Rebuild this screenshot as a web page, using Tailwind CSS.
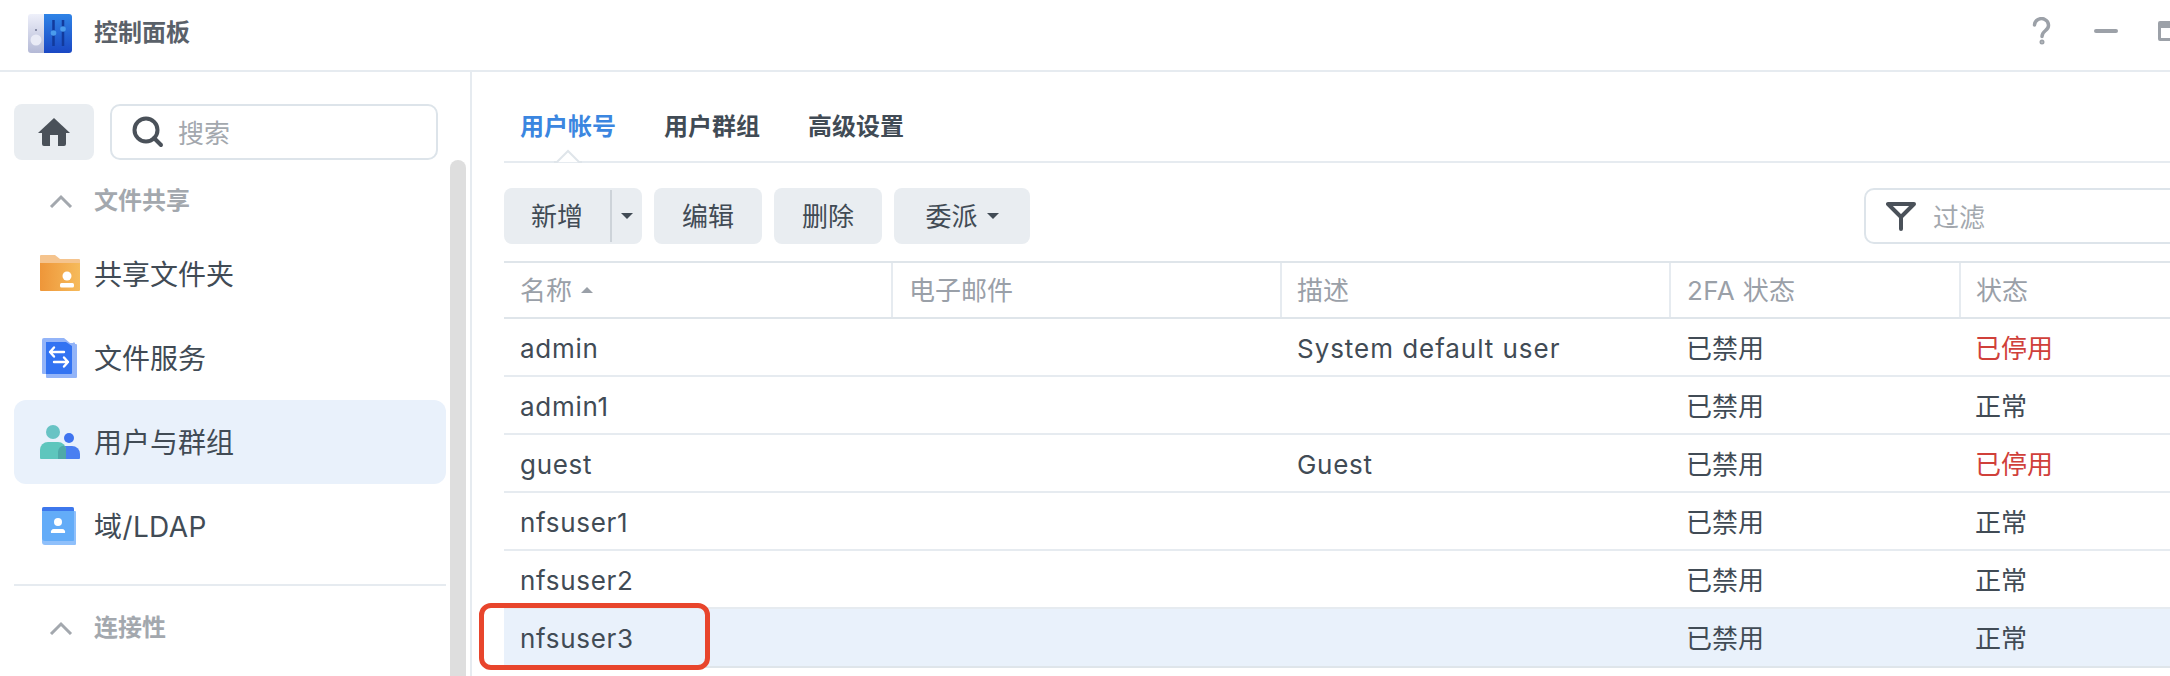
<!DOCTYPE html>
<html lang="zh-CN">
<head>
  <meta charset="UTF-8" />
  <title>控制面板</title>
  <script src="https://cdn.jsdelivr.net/npm/@tailwindcss/browser@4"></script>
</head>
<body class="bg-white text-[#414b55] [font-family:'Inter','Noto_Sans_CJK_SC',sans-serif] w-[2170px] h-[676px] overflow-hidden relative">

  <!-- title bar -->
  <header class="h-[72px] border-b-2 border-[#e6ebf0] flex items-center overflow-hidden pl-[28px]">
    <svg class="w-[44px] h-[40px] shrink-0 -mt-[3px]" viewBox="0 0 44 40">
      <defs>
        <linearGradient id="logoL" x1="0" y1="0" x2="0" y2="1"><stop offset="0" stop-color="#eef0fa"/><stop offset="1" stop-color="#b4b9d6"/></linearGradient>
        <linearGradient id="logoR" x1="0" y1="0" x2="0" y2="1"><stop offset="0" stop-color="#2f83e6"/><stop offset="1" stop-color="#1a48c4"/></linearGradient>
      </defs>
      <path d="M3 0h14v39H3a3 3 0 0 1-3-3V3a3 3 0 0 1 3-3z" fill="url(#logoL)"/>
      <path d="M16 0h25a3 3 0 0 1 3 3v33a3 3 0 0 1-3 3H16z" fill="url(#logoR)"/>
      <circle cx="8" cy="26" r="5.500" fill="#e9ebf6"/>
      <circle cx="8" cy="16" r="1" fill="#6d7390"/>
      <path d="M25.500 6v26M35 6v26" stroke="#123a9c" stroke-width="2.500"/>
      <circle cx="25.500" cy="19" r="2.800" fill="#4a9bec"/>
      <circle cx="35" cy="15" r="2.800" fill="#4a9bec"/>
    </svg>
    <span class="ml-[22px] text-[24px] font-semibold text-[#5a6169] -mt-[4px]">控制面板</span>
    <div class="ml-auto flex items-center -mt-[8px]">
      <svg class="w-[20px] h-[28px]" viewBox="0 0 20 28" fill="none" stroke="#9ca1a8" stroke-width="3.500" stroke-linecap="round">
        <path d="M2.500 8a7 6.500 0 1 1 11 5.500c-2.500 2-3.500 3-3.500 6"/>
        <circle cx="10" cy="25" r="1" stroke-width="3"/>
      </svg>
      <div class="w-[24px] h-[4px] rounded-full bg-[#9ca1a8] ml-[42px]"></div>
      <div class="w-[24px] h-[20px] shrink-0 rounded-[2px] border-[3px] border-t-[7px] border-[#9ca1a8] ml-[40px] -mr-[12px]"></div>
    </div>
  </header>

  <div class="flex h-[604px]">
    <!-- sidebar -->
    <aside class="relative w-[472px] shrink-0 border-r-2 border-[#e6ebf0] pt-[32px] px-[14px]">
      <div class="flex gap-[16px] w-[424px]">
        <div class="w-[80px] h-[56px] rounded-[8px] bg-[#e9edf1] flex items-center justify-center">
          <svg class="w-[34px] h-[30px]" viewBox="0 0 34 30" fill="#4a5159">
            <path d="M1 16 17 1l16 15z"/>
            <path fill-rule="evenodd" d="M5 14h24v13a2 2 0 0 1-2 2H7a2 2 0 0 1-2-2z M13 18v11h8V18z"/>
          </svg>
        </div>
        <div class="w-[328px] h-[56px] rounded-[10px] border-2 border-[#dde4ea] flex items-center pl-[20px]">
          <svg class="w-[32px] h-[32px]" viewBox="0 0 32 32" fill="none" stroke="#4a5159" stroke-width="4" stroke-linecap="round">
            <circle cx="14" cy="14" r="11.500"/>
            <path d="M22 22l7 7"/>
          </svg>
          <span class="ml-[14px] text-[26px] text-[#a3a8ae] mt-[2px]">搜索</span>
        </div>
      </div>

      <div class="mt-[12px] h-[58px] flex items-center pl-[35px] text-[24px] font-semibold text-[#a3a8ae]">
        <svg class="w-[24px] h-[14px]" viewBox="0 0 24 14" fill="none" stroke="#a3a8ae" stroke-width="3"><path d="M2 13 12 3l10 10"/></svg>
        <span class="ml-[21px]">文件共享</span>
      </div>

      <nav class="mt-[2px] w-[432px] text-[28px]">
        <div class="h-[84px] flex items-center pl-[26px] gap-[14px]">
          <svg class="w-[40px] h-[40px]" viewBox="0 0 40 40">
            <defs><linearGradient id="fold" x1="0" y1="0" x2="1" y2="0"><stop offset="0" stop-color="#ee9639"/><stop offset="1" stop-color="#f6bb5c"/></linearGradient></defs>
            <path d="M1 1h14l5 4h19a1 1 0 0 1 1 1v6H0V2a1 1 0 0 1 1-1z" fill="#f5c48e"/>
            <path d="M0 9h40v27a1 1 0 0 1-1 1H1a1 1 0 0 1-1-1z" fill="url(#fold)"/>
            <circle cx="27" cy="22" r="4.500" fill="#fff"/>
            <rect x="20" y="29" width="14" height="4.500" rx="1.500" fill="#fff"/>
          </svg>
          <span class="mt-[2px]">共享文件夹</span>
        </div>
        <div class="h-[84px] flex items-center pl-[26px] gap-[14px]">
          <svg class="w-[40px] h-[40px]" viewBox="0 0 40 40">
            <path d="M4 0h20l6 5h3a1 1 0 0 1 2 1h1a1 1 0 0 1 1 1v32a1 1 0 0 1-1 1H7a1 1 0 0 1-1-1v-3H3a1 1 0 0 1-1-1V2a2 2 0 0 1 2-2z" fill="#93b4f8"/>
            <path d="M6 4h20l6 4v27a1 1 0 0 1-1 1H6z" fill="#3273f2"/>
            <path d="M10 14h14M14 9.500 10 14l4 4.500M28 24H14M24 19.500l4 4.500-4 4.500" fill="none" stroke="#fff" stroke-width="2.400" stroke-linecap="round" stroke-linejoin="round"/>
          </svg>
          <span class="mt-[2px]">文件服务</span>
        </div>
        <div class="h-[84px] flex items-center pl-[26px] gap-[14px] rounded-[12px] bg-[#e9f1fb]">
          <svg class="w-[40px] h-[40px]" viewBox="0 0 40 40">
            <circle cx="29" cy="16" r="5" fill="#3f74ef"/>
            <path d="M22 24h10a8 8 0 0 1 8 8v4a1 1 0 0 1-1 1H22z" fill="#4a7ff1"/>
            <circle cx="13" cy="10" r="7" fill="#68c3c4"/>
            <path d="M8 20h10a8 8 0 0 1 8 8v9H1a1 1 0 0 1-1-1v-8a8 8 0 0 1 8-8z" fill="#5ec6bd"/>
            <path d="M18 37v-7a7 7 0 0 1 6-6.500 8 8 0 0 1 2 4.500v9z" fill="#4fa9a8"/>
          </svg>
          <span class="mt-[2px]">用户与群组</span>
        </div>
        <div class="h-[84px] flex items-center pl-[26px] gap-[14px]">
          <svg class="w-[40px] h-[40px]" viewBox="0 0 40 40">
            <path d="M4 1h28a2 2 0 0 1 2 2v2h1a1 1 0 0 1 1 1v32a1 1 0 0 1-1 1H5a3 3 0 0 1-3-3V3a2 2 0 0 1 2-2z" fill="#8fc0fb"/>
            <path d="M2 6a2 2 0 0 1 2-2h30v30a1 1 0 0 1-1 1H5a3 3 0 0 1-3-3z" fill="#63acf8"/>
            <path d="M2 3a2 2 0 0 1 2-2h28a2 2 0 0 1 2 2v2H2z" fill="#3d77ec"/>
            <circle cx="18" cy="16" r="4" fill="#fff"/>
            <path d="M11 27a3 3 0 0 1 3-4h8a3 3 0 0 1 3 4z" fill="#fff"/>
          </svg>
          <span class="mt-[2px] tracking-[0.4px]">域/LDAP</span>
        </div>
      </nav>

      <div class="mt-[16px] w-[432px] h-[2px] bg-[#e6ebf0]"></div>
      <div class="mt-[14px] h-[56px] flex items-center pl-[35px] text-[24px] font-semibold text-[#a3a8ae]">
        <svg class="w-[24px] h-[14px]" viewBox="0 0 24 14" fill="none" stroke="#a3a8ae" stroke-width="3"><path d="M2 13 12 3l10 10"/></svg>
        <span class="ml-[21px]">连接性</span>
      </div>

      <!-- scrollbar -->
      <div class="absolute left-[450px] top-[88px] bottom-0 w-[16px] rounded-t-full bg-[#dedede]"></div>
    </aside>

    <!-- main pane -->
    <main class="flex-1 min-w-0 overflow-hidden pl-[32px]">
      <div class="w-[1696px]">
        <!-- tabs -->
        <div class="relative h-[91px] border-b-2 border-[#e6ebf0] flex items-center gap-[48px] pl-[16px] pt-[20px] text-[24px] font-semibold">
          <span class="text-[#3b86e0]">用户帐号</span>
          <span>用户群组</span>
          <span>高级设置</span>
          <svg class="absolute left-[50px] bottom-[-2px] w-[28px] h-[15px]" viewBox="0 0 28 15"><path d="M0 14h3L14 3l11 11h3" fill="#fff" stroke="#dfe5ea" stroke-width="2"/></svg>
        </div>

        <!-- toolbar -->
        <div class="mt-[25px] flex justify-between text-[26px]">
          <div class="flex gap-[12px]">
            <div class="h-[56px] w-[138px] rounded-[8px] bg-[#e9edf1] flex items-center">
              <span class="w-[106px] text-center">新增</span>
              <span class="w-[2px] h-[52px] bg-[#cdd3d9]"></span>
              <span class="flex-1 flex justify-center"><span class="w-0 h-0 border-x-[6px] border-x-transparent border-t-[6px] border-t-[#414b55]"></span></span>
            </div>
            <div class="h-[56px] w-[108px] rounded-[8px] bg-[#e9edf1] flex items-center justify-center">编辑</div>
            <div class="h-[56px] w-[108px] rounded-[8px] bg-[#e9edf1] flex items-center justify-center">删除</div>
            <div class="h-[56px] w-[136px] rounded-[8px] bg-[#e9edf1] flex items-center justify-center gap-[9px]">
              委派<span class="w-0 h-0 border-x-[6px] border-x-transparent border-t-[6px] border-t-[#414b55]"></span>
            </div>
          </div>
          <div class="h-[56px] w-[336px] rounded-[10px] border-2 border-[#dde4ea] flex items-center pl-[20px]">
            <svg class="w-[30px] h-[30px]" viewBox="0 0 30 30" fill="none" stroke="#4a5159" stroke-width="4" stroke-linecap="round" stroke-linejoin="round">
              <path d="M2 3h26L15 16zM15 16v12"/>
            </svg>
            <span class="ml-[17px] text-[#a3a8ae] mt-[2px]">过滤</span>
          </div>
        </div>

        <!-- table -->
        <div class="mt-[17px] text-[26px]">
          <div class="h-[58px] grid grid-cols-[387px_389px_389px_290px_241px] border-y-2 border-[#dfe5ea] text-[#9aa0a8]">
            <div class="flex items-center pl-[16px] gap-[9px]">名称<span class="w-0 h-0 border-x-[6px] border-x-transparent border-b-[6px] border-b-[#9aa0a8]"></span></div>
            <div class="flex items-center pl-[16px] border-l-2 border-[#e6ebf0]">电子邮件</div>
            <div class="flex items-center pl-[15px] border-l-2 border-[#e6ebf0]">描述</div>
            <div class="flex items-center pl-[16px] border-l-2 border-[#e6ebf0] tracking-[0.4px]">2FA 状态</div>
            <div class="flex items-center pl-[15px] border-l-2 border-[#e6ebf0]">状态</div>
          </div>

          <div class="h-[58px] pt-[2px] grid grid-cols-[387px_389px_389px_290px_241px] items-center border-b-2 border-[#e6ebf0]">
            <div class="pl-[16px] tracking-[0.7px]">admin</div><div></div><div class="pl-[17px] tracking-[0.95px]">System default user</div><div class="pl-[17px]">已禁用</div><div class="pl-[16px] text-[#d0403a]">已停用</div>
          </div>
          <div class="h-[58px] pt-[2px] grid grid-cols-[387px_389px_389px_290px_241px] items-center border-b-2 border-[#e6ebf0]">
            <div class="pl-[16px] tracking-[0.7px]">admin1</div><div></div><div></div><div class="pl-[17px]">已禁用</div><div class="pl-[16px]">正常</div>
          </div>
          <div class="h-[58px] pt-[2px] grid grid-cols-[387px_389px_389px_290px_241px] items-center border-b-2 border-[#e6ebf0]">
            <div class="pl-[16px] tracking-[0.7px]">guest</div><div></div><div class="pl-[17px] tracking-[0.7px]">Guest</div><div class="pl-[17px]">已禁用</div><div class="pl-[16px] text-[#d0403a]">已停用</div>
          </div>
          <div class="h-[58px] pt-[2px] grid grid-cols-[387px_389px_389px_290px_241px] items-center border-b-2 border-[#e6ebf0]">
            <div class="pl-[16px] tracking-[0.7px]">nfsuser1</div><div></div><div></div><div class="pl-[17px]">已禁用</div><div class="pl-[16px]">正常</div>
          </div>
          <div class="h-[58px] pt-[2px] grid grid-cols-[387px_389px_389px_290px_241px] items-center border-b-2 border-[#e6ebf0]">
            <div class="pl-[16px] tracking-[0.7px]">nfsuser2</div><div></div><div></div><div class="pl-[17px]">已禁用</div><div class="pl-[16px]">正常</div>
          </div>
          <div class="h-[59px] pt-[2px] grid grid-cols-[387px_389px_389px_290px_241px] items-center bg-[#e9f1fb] border-b-2 border-[#dfe5ea]">
            <div class="pl-[16px] tracking-[0.7px]">nfsuser3</div><div></div><div></div><div class="pl-[17px]">已禁用</div><div class="pl-[16px]">正常</div>
          </div>
        </div>
      </div>
    </main>
  </div>

  <!-- red annotation box over the selected row -->
  <div class="absolute left-[479px] top-[603px] w-[231px] h-[67px] rounded-[12px] border-[5px] border-[#e8452c]"></div>
</body>
</html>
